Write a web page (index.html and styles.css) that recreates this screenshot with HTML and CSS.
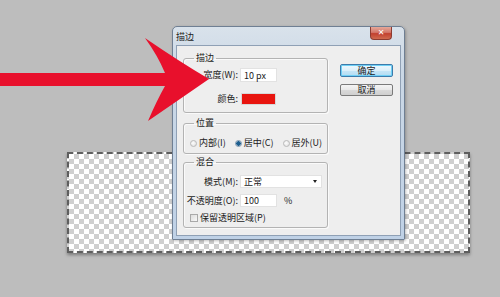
FILE: index.html
```html
<!DOCTYPE html>
<html lang="zh-CN">
<head>
<meta charset="utf-8">
<title>描边</title>
<link rel="stylesheet" href="styles.css">
</head>
<body>
<div class="stage">
  <div class="doc"></div>

  <div class="dialog">
    <div class="titlebar">
      <span class="title">描边</span>
      <span class="close">✕</span>
    </div>
    <div class="client">
      <div class="groups">
        <fieldset class="group g-stroke">
          <legend>描边</legend>
          <div class="form form-stroke">
            <span class="lbl">宽度(W):</span>
            <span class="field w37">10 px</span>
            <span class="lbl">颜色:</span>
            <span class="swatch"></span>
          </div>
        </fieldset>

        <fieldset class="group g-pos">
          <legend>位置</legend>
          <div class="radios">
            <span class="opt"><span class="radio"></span>内部(I)</span>
            <span class="opt"><span class="radio on"></span>居中(C)</span>
            <span class="opt"><span class="radio"></span>居外(U)</span>
          </div>
        </fieldset>

        <fieldset class="group g-blend">
          <legend>混合</legend>
          <div class="form form-blend">
            <span class="lbl">模式(M):</span>
            <span class="field select">正常<span class="caret"></span></span>
            <span class="lbl">不透明度(O):</span>
            <span class="pct"><span class="field w37">100</span><span class="unit">%</span></span>
          </div>
          <div class="check"><span class="box"></span>保留透明区域(P)</div>
        </fieldset>
      </div>

      <div class="buttons">
        <span class="btn default">确定</span>
        <span class="btn">取消</span>
      </div>
    </div>
  </div>

  <svg class="arrow" viewBox="0 0 500 297" width="500" height="297">
    <path d="M0,73 L165,73 Q158,56 145,38 Q180,62 209,79 Q180,99 148,121 Q157,100 165,86 L0,86 Z" fill="#e8102c"/>
  </svg>
</div>
</body>
</html>
```

FILE: styles.css
```css
* { box-sizing: border-box; }

html, body {
  margin: 0;
  padding: 0;
}

body {
  width: 500px;
  height: 297px;
  overflow: hidden;
  background: #bdbdbd;
  font-family: "Noto Sans CJK SC", "Noto Sans", sans-serif;
  font-size: 9px;
  color: #1b1b1b;
}

.stage {
  position: relative;
  width: 500px;
  height: 297px;
}

/* transparent document on the canvas */
.doc {
  position: absolute;
  left: 67px;
  top: 152px;
  width: 403px;
  height: 101px;
  border: 2px dashed #5e5e5e;
  background-color: #fff;
  background-image: conic-gradient(#cfcfcf 25%, #ffffff 0 50%, #cfcfcf 0 75%, #ffffff 0);
  background-size: 10px 10px;
  box-shadow: 0 2px 3px rgba(0, 0, 0, 0.35);
}

/* dialog window */
.dialog {
  position: absolute;
  left: 172px;
  top: 26px;
  width: 233px;
  height: 214px;
  border: 1px solid #6f7f93;
  border-radius: 5px 5px 1px 1px;
  padding: 0 3px 3px 3px;
  background: linear-gradient(to bottom, #d9e2eb 0, #cbd8e6 20%, #bfd1e6 100%);
  display: flex;
  flex-direction: column;
  box-shadow: 1px 1px 3px rgba(0, 0, 0, 0.25);
}

.titlebar {
  height: 18px;
  display: flex;
  justify-content: space-between;
  align-items: flex-start;
}

.title {
  margin-top: 4px;
  line-height: 11px;
  color: #222;
}

.close {
  width: 22px;
  height: 13px;
  margin-right: 9px;
  border: 1px solid #8c3b31;
  border-top: 0;
  border-radius: 0 0 4px 4px;
  background: linear-gradient(to bottom, #e6a899 0, #d4776a 45%, #c2402f 55%, #d06a4f 100%);
  color: #fff;
  font-family: "DejaVu Sans", sans-serif;
  font-size: 8px;
  font-weight: bold;
  line-height: 12px;
  text-align: center;
}

.client {
  flex: 1;
  border: 1px solid #8fa0b5;
  background: #eeeeee;
  display: flex;
  align-items: flex-start;
  gap: 12px;
  padding: 6px 0 0 6px;
}

.groups {
  width: 145px;
  display: flex;
  flex-direction: column;
}

.group {
  margin: 0;
  min-width: 0;
  border: 1px solid #b3b3b3;
  border-radius: 3px;
  box-shadow: inset 1px 1px 0 #fafafa, 1px 1px 0 #fafafa;
  padding: 0 2px;
}

.group legend {
  padding: 0 2px;
  margin-left: 8px;
  line-height: 12px;
}

.g-stroke { padding-top: 4px; padding-bottom: 7px; }
.g-pos { margin-top: 4px; padding: 8px 2px 4px 6px; }
.g-pos legend { margin-left: 4px; }
.g-blend { margin-top: 2px; padding-top: 7px; padding-bottom: 4px; }

.form {
  display: grid;
  grid-template-columns: 52px auto;
  column-gap: 2px;
  align-items: center;
}

.form-stroke {
  grid-template-rows: 14px 12px;
  row-gap: 11px;
}

.form-blend {
  grid-template-rows: 13px 13px;
  row-gap: 6px;
}

.lbl {
  text-align: right;
  white-space: nowrap;
  line-height: 12px;
}

.field {
  display: flex;
  align-items: center;
  height: 100%;
  background: #fff;
  border: 1px solid #e2e2e2;
  padding-left: 3px;
  line-height: 11px;
  white-space: nowrap;
}

.w37 { width: 37px; }

.swatch {
  width: 35px;
  height: 12px;
  margin-left: 1px;
  background: #e8150f;
  border: 1px solid #d8d8d8;
}

.select {
  width: 82px;
  justify-content: space-between;
  padding-right: 4px;
}

.caret {
  width: 0;
  height: 0;
  border-left: 2.5px solid transparent;
  border-right: 2.5px solid transparent;
  border-top: 3px solid #222;
}

.pct {
  display: flex;
  align-items: center;
  height: 13px;
  gap: 7px;
}

.unit { line-height: 11px; }

.radios {
  display: flex;
  align-items: center;
  height: 12px;
  gap: 9px;
}

.opt {
  display: flex;
  align-items: center;
  gap: 2px;
  line-height: 12px;
  white-space: nowrap;
}

.radio {
  width: 7px;
  height: 7px;
  border-radius: 50%;
  border: 1px solid #b9b9b9;
  background: radial-gradient(circle at 40% 40%, #fdfdfd, #dcdcdc);
}

.radio.on {
  border-color: #7d96ad;
  background: radial-gradient(circle at 50% 50%, #1d5e8e 0 2px, #cfe0ee 2.5px);
}

.check {
  display: flex;
  align-items: center;
  gap: 2px;
  height: 10px;
  margin-top: 6px;
  margin-left: 4px;
  line-height: 10px;
  white-space: nowrap;
}

.box {
  width: 8px;
  height: 8px;
  border: 1px solid #a9a9a9;
  background: linear-gradient(135deg, #dcdcdc, #f8f8f8);
}

.buttons {
  margin-top: 12px;
  display: flex;
  flex-direction: column;
  gap: 7px;
}

.btn {
  width: 53px;
  height: 12px;
  border: 1px solid #7a7a7a;
  border-radius: 2px;
  background: linear-gradient(to bottom, #f4f4f4 0, #e8e8e8 50%, #d9d9d9 51%, #cfcfcf 100%);
  text-align: center;
  line-height: 10px;
  font-size: 9px;
}

.btn.default {
  height: 13px;
  border-color: #3d7bab;
  background: linear-gradient(to bottom, #eef8fd 0, #dcf0fa 50%, #c6e6f7 51%, #b3dcf2 100%);
  box-shadow: inset 0 0 0 1px #6fd0f5;
  line-height: 11px;
}

.arrow {
  position: absolute;
  left: 0;
  top: 0;
  pointer-events: none;
}
```
